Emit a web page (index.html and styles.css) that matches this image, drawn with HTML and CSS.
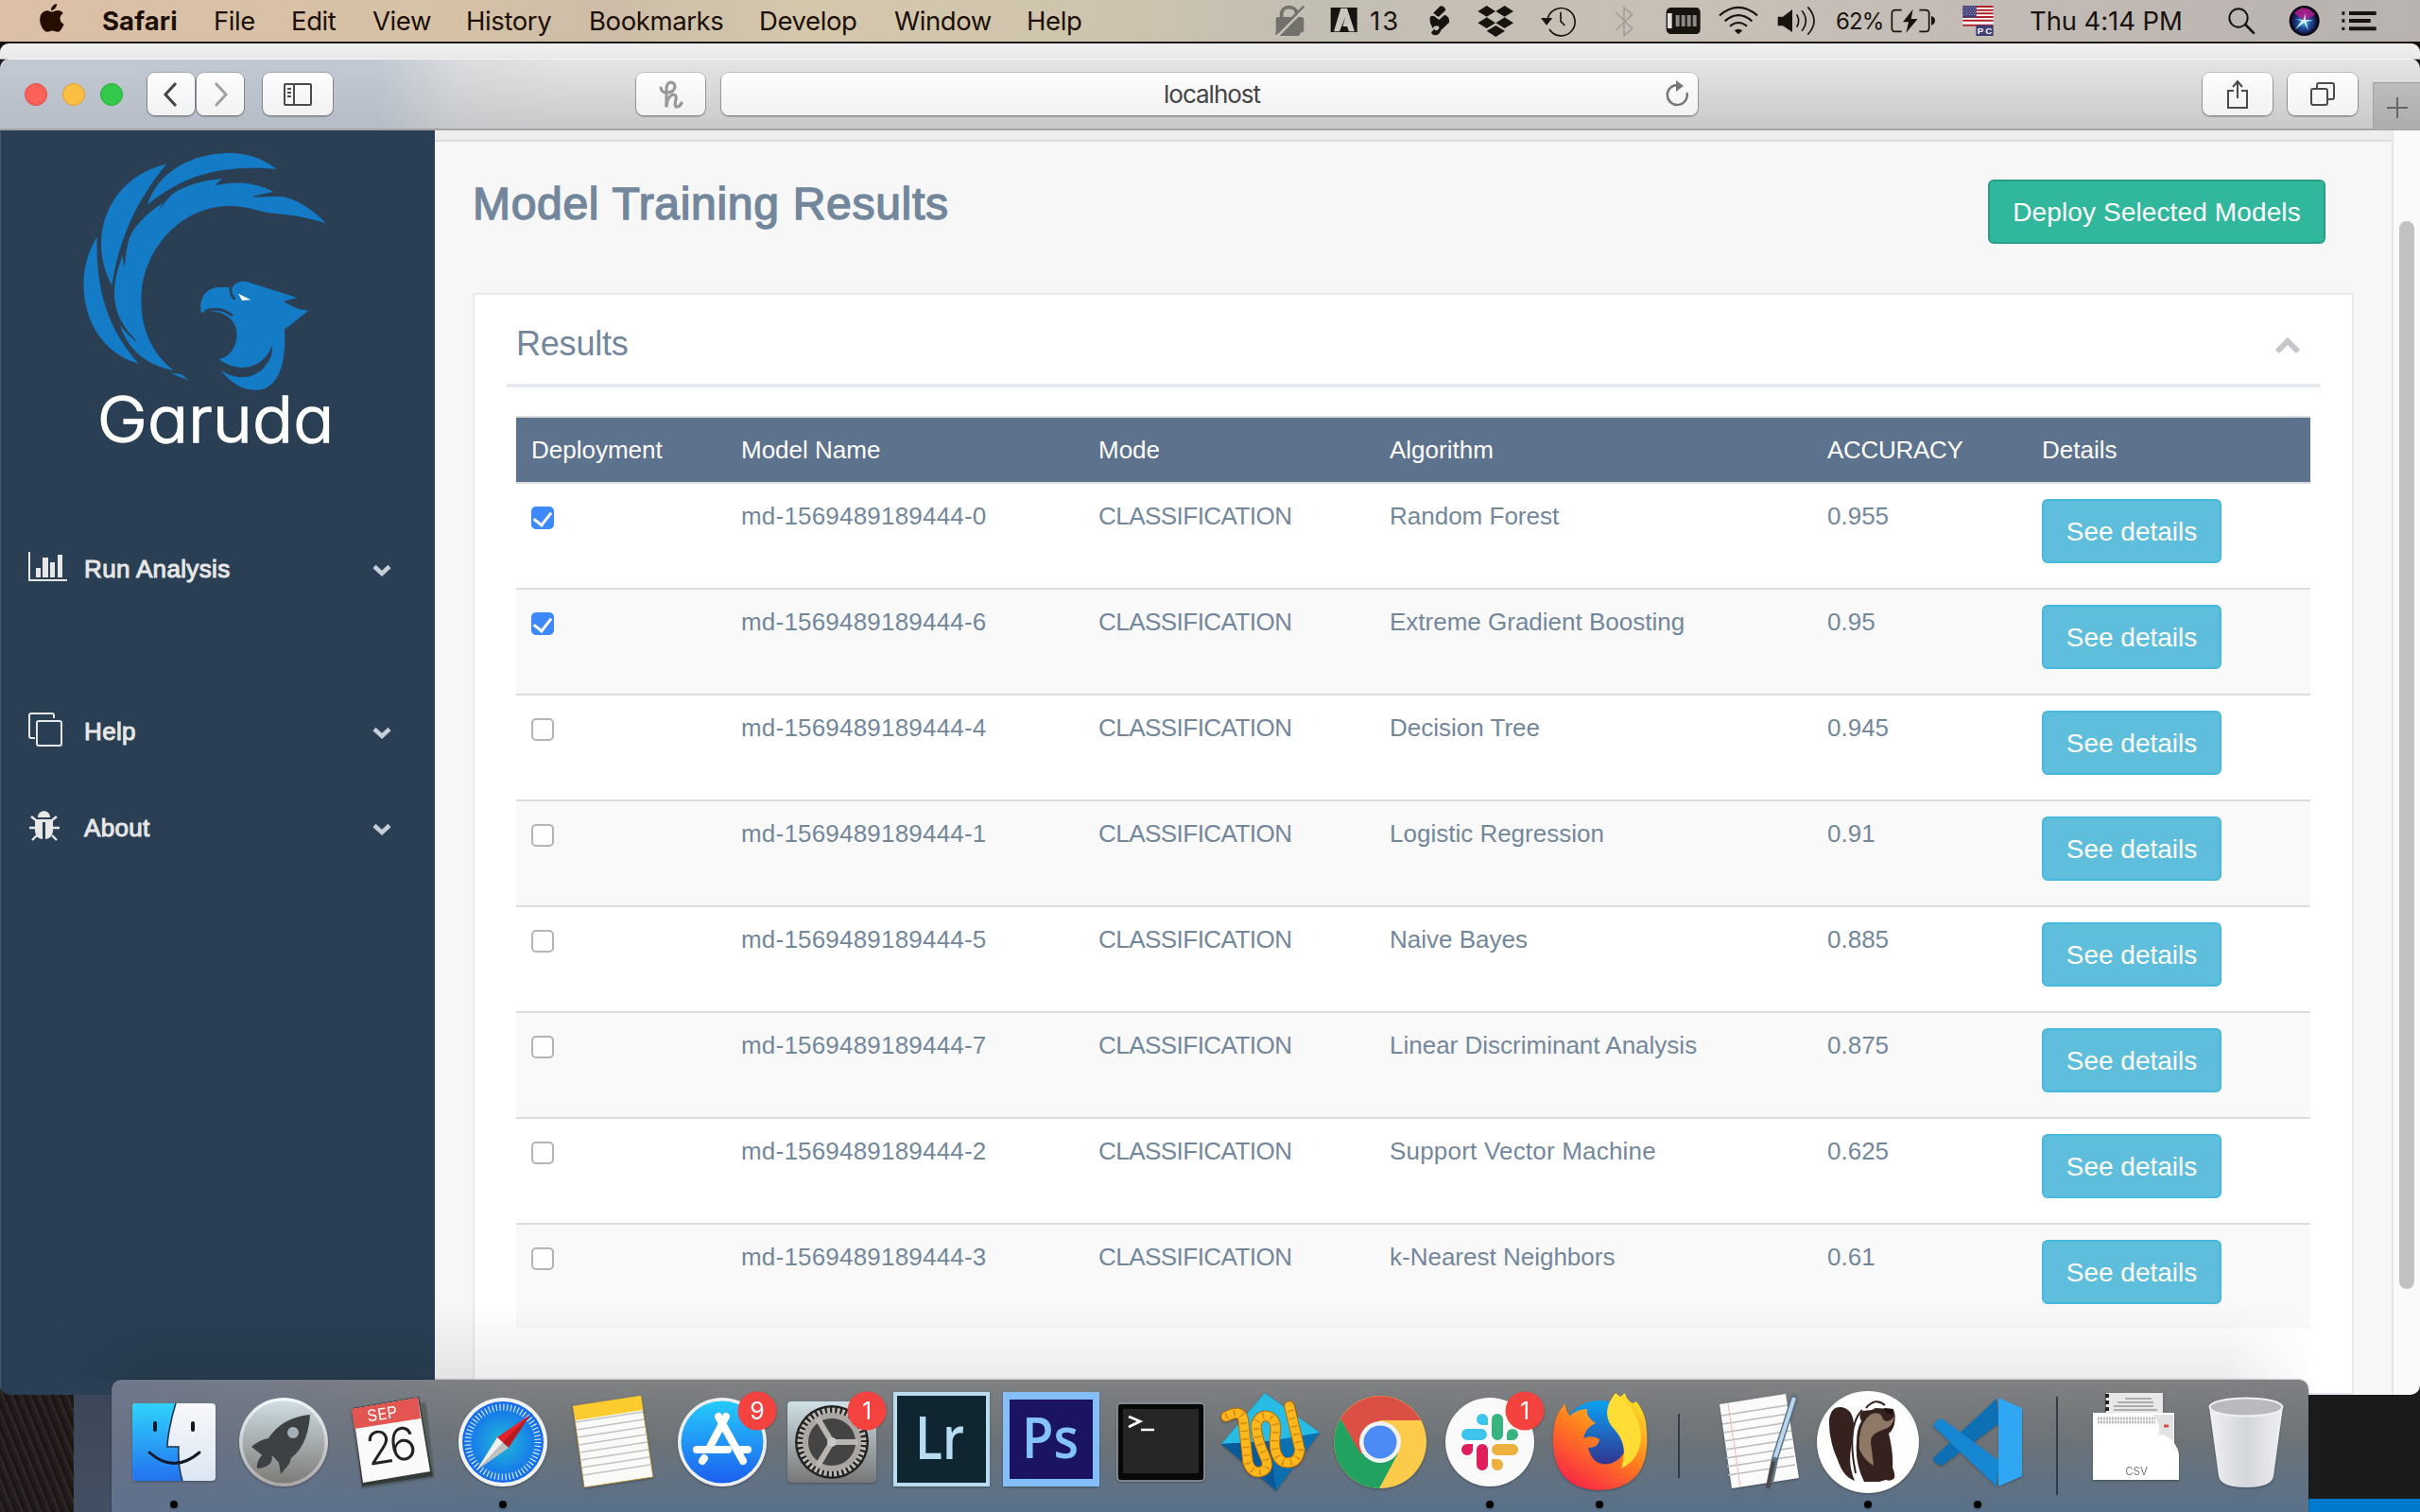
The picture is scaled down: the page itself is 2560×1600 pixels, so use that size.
FILE: index.html
```html
<!DOCTYPE html>
<html lang="en">
<head>
<meta charset="utf-8">
<title>Model Training Results</title>
<link rel="stylesheet" href="styles.css">
</head>
<body>
<header class="menubar">
  <svg class="apple" viewBox="0 0 26 32"><path d="M18 0c.4 3.400-2.600 7-6 7C11.600 3.600 14.800.5 18 0zM13.200 8.600c1.500 0 3.300-1.600 6-1.600 2.200 0 4.400 1.200 5.600 3-4.800 2.800-4 9.400.8 11.400-1 2.800-3.800 8.400-6.600 8.400-2.200 0-2.900-1.300-5.500-1.300S9.900 29.800 8 29.800C4.400 29.800.2 23 .2 16.800.2 10.600 4 7.200 7.800 7.200c2.400 0 4 1.400 5.400 1.400z"/></svg>
  <nav class="menus"><b>Safari</b><span>File</span><span>Edit</span><span>View</span><span>History</span><span>Bookmarks</span><span>Develop</span><span>Window</span><span>Help</span></nav>
  <div class="extras">
    <svg width="32" height="44" viewBox="26 0 96 132" fill="#73716b"><path d="M46 56V44c0-28 48-28 48 0v12" fill="none" stroke="#73716b" stroke-width="11"/><path d="M32 54h80q5 2 5 10v36l-10 4-6 10H42l-2-8q-12-2-12-10V64q0-8 4-10z"/><path d="M30 118 124 24" stroke="#c5c1b7" stroke-width="8"/><path d="M26 109 117 20" stroke="#73716b" stroke-width="7"/></svg>
    <svg width="30" height="44" viewBox="202 0 90 132"><path d="M204 24h84v78h-84z"/><path d="M214 100 236 26h20l24 74h-18l-6-16h-14l9-31-19 47z" fill="#cac6bd"/></svg>
    <span class="count">13</span>
    <svg width="24" height="44" viewBox="520 0 72 132"><path d="m532 42 20-20q6-6 12-2l6 6q4 5-1 9l-19 18q-6-2-10-6-4-4-8-5z"/><path d="M524 52q8-5 18 4l9 7 17-15q10 0 15 14v9l-25 24q-6-14-16-13-8 1-11 8-14-25-7-38z"/><path d="M552 82q8 4 5 15-5 15-19 15-10-1-12-9l10-11q3 1 2 5l8-1q7-5 6-14z"/></svg>
    <svg width="40" height="44" viewBox="668 0 120 132"><path d="m697 18 28 18-28 17-28-17zm57 0 28 18-28 17-28-17zm-57 37 28 18-28 17-28-17zm57 0 28 18-28 17-28-17zm-28 26 29 17-29 19-29-19z"/></svg>
    <svg width="38" height="44" viewBox="870 0 114 132"><path d="M891 62a44 44 0 1 1 6 31M933 38v30l13 13" fill="none" stroke="#1b160f" stroke-width="5"/><path d="M870 57h37l-19 23z"/></svg>
    <svg width="22" height="44" viewBox="1106 0 66 132" fill="none" stroke="#a39e97" stroke-width="5"><path d="m1110 39 52 52-26 22V24l26 22-52 50"/></svg>
    <svg width="38" height="44" viewBox="1264 0 114 132"><path d="M1278 24h84q12 2 12 16v52q0 14-12 16h-84q-12-4-12-16V40q0-12 12-16z"/><path d="M1270 42h14v48h-14z" fill="#e5e0dc"/><path d="M1296 48h12v36h-12zm18 0h12v36h-12zm18 0h12v36h-12zm18 0h12v36h-12z" fill="#8d8885"/></svg>
    <svg width="42" height="44" viewBox="1434 0 126 132" fill="none" stroke="#17130f" stroke-width="6.500"><path d="M1437 49q60-51 120 0M1454 67q43-37 86 0M1470 83q27-22 54 0"/><path d="M1484 97q13-9 26 0l-13 12z" fill="#17130f" stroke="none"/></svg>
    <svg width="42" height="44" viewBox="59 0 126 132"><path d="M61 53h16l30-23v72L77 82H61z"/><path d="M121 46q12 20 0 40M137 34q26 32 0 64M156 22q40 44 0 88" fill="none" stroke="#17130f" stroke-width="5"/></svg>
    <span class="pct">62%</span>
    <svg width="48" height="44" viewBox="417 0 144 132"><path d="M452 32h-20q-11 0-11 11v46q0 11 11 11h20M508 32h20q11 0 11 11v46q0 11-11 11h-20" fill="none" stroke="#17130f" stroke-width="5"/><path d="m488 29-32 41h18l-8 34 37-44h-21zM546 51q12 3 12 14t-12 15z"/></svg>
    <svg width="34" height="44" viewBox="647 0 102 132"><path fill="#fff" d="M648 18h97v65h-97z"/><path stroke="#b02029" stroke-width="6" d="M648 21h97M648 32h97M648 43h97M648 54h97M648 65h97M648 80h97"/><path fill="#3f3f78" d="M648 18h43v38h-43zM690 80h55v34h-55z"/><path stroke="#bbbad4" stroke-width="3" stroke-dasharray="3 5" d="M651 23h38M655 29h34M651 35h38M655 41h34M651 47h38"/><text x="694" y="107" font-family="Liberation Sans" font-weight="700" font-size="29" fill="#fff" textLength="46">PC</text></svg>
    <time class="clock">Thu 4:14 PM</time>
    <svg width="31" height="44" viewBox="1493 0 93 132" fill="none" stroke="#17130f"><circle cx="1526" cy="57" r="29" stroke-width="6"/><path d="m1548 78 28 29" stroke-width="8"/></svg>
    <svg width="34" height="44" viewBox="1684 0 102 132"><defs><radialGradient id="siri" cx=".5" cy=".55"><stop offset="0" stop-color="#4fb4e6"/><stop offset=".5" stop-color="#1c4f9a"/><stop offset="1" stop-color="#130c38"/></radialGradient></defs><circle cx="1734" cy="66" r="48" fill="#08060f"/><circle cx="1734" cy="66" r="41" fill="url(#siri)"/><path d="M1702 42q32-36 66 4l-32 22z" fill="#b31d8c" opacity=".85"/><path d="m1706 60 25 3 6-22 1 22 26 2-24 4 7 28-14-25-28 22 20-28z" fill="#cdeefa"/></svg>
    <svg width="38" height="44" viewBox="1852 0 114 132"><path d="M1853 37h9v10h-9zm0 24h9v10h-9zm0 25h9v10h-9zM1876 36h86v12h-86zm0 24h68v12h-68zm0 25h86v12h-86z"/></svg>
  </div>
</header>
<div class="back-window"></div>
<main class="window">
  <div class="toolbar">
    <div class="lights"><i class="red"></i><i class="yellow"></i><i class="green"></i></div>
    <div class="tb back"><svg width="20" height="30" viewBox="0 0 20 30"><path d="M15 3 4 15l11 12" fill="none" stroke="#444" stroke-width="3"/></svg></div>
    <div class="tb fwd"><svg width="20" height="30" viewBox="0 0 20 30"><path d="m5 3 11 12L5 27" fill="none" stroke="#a0a0a0" stroke-width="3"/></svg></div>
    <div class="tb side"><svg width="32" height="26" viewBox="0 0 32 26" fill="none" stroke="#4b4b4b" stroke-width="2"><rect x="2" y="2" width="28" height="22" rx="1"/><path d="M12 2v22M5 7h4M5 11h4M5 15h4"/></svg></div>
    <div class="tb honey"><svg width="26" height="30" viewBox="0 0 26 30" fill="none" stroke="#999" stroke-linecap="round"><path d="M2 8q1 5 6 5 8 0 9-6 0-4-4-5-5 0-5 8v17" stroke-width="3.200"/><path d="M8 27q1-10 7-12 4 0 3 5-2 8 1 8 3 0 5-4" stroke-width="3.200"/></svg></div>
    <div class="url"><span>localhost</span><svg width="26" height="30" viewBox="0 0 26 30"><path d="M14 5a10.500 10.500 0 1 0 9.500 8" fill="none" stroke="#777" stroke-width="2.500"/><path d="m12 0 8 6-8 6z" fill="#777"/></svg></div>
    <div class="tb share"><svg width="26" height="32" viewBox="0 0 26 32" fill="none" stroke="#4b4b4b" stroke-width="2"><path d="M9 12H3v18h20V12h-6M13 20V3M8 8l5-6 5 6"/></svg></div>
    <div class="tb tabs"><svg width="28" height="28" viewBox="0 0 28 28" fill="none" stroke="#4b4b4b" stroke-width="2"><rect x="2" y="8" width="17" height="17" rx="2"/><path d="M8 8V4q0-2 2-2h14q2 0 2 2v13q0 2-2 2h-5"/></svg></div>
    <div class="newtab"><svg width="24" height="24" viewBox="0 0 24 24"><path d="M12 1v22M1 12h22" stroke="#666" stroke-width="2"/></svg></div>
  </div>
  <div class="page">
    <aside class="sidebar">
      <svg class="logo" width="460" height="367" viewBox="3 24 1380 1101" fill="#147bc7">
        <path d="M468 260C500 160 600 97 730 96c60 0 110 20 148 51-170-15-290 15-410 113zM528 131c-90 110-150 230-173 385C270 360 350 170 528 131zM308 362c-5 160 30 290 132 402C270 720 220 500 308 362z"/>
        <path d="M705 178c-50 2-120 20-160 50-20 20-28 34-42 54 4-12 12-22 16-30-60 40-110 90-115 140-4 20-6 40-9 66-4-14-4-24-6-36-20 50-27 90-26 130 5 60 30 100 76 146-20-10-46-40-58-56 20 70 80 128 170 144-80-60-110-160-102-250 10-140 130-275 285-272 60 2 90 18 120 22 60 4 120 14 180 32-50-50-100-78-140-84-30-1-70 2-95 1 22-8 50-12 70-16-60-30-120-36-186-20 6-8 14-14 22-21zM540 794l60 24-24-20z"/>
        <path d="M638 602c-8-50 20-80 60-80h40c10-20 40-24 60-13l145 46-44 12c20 10 40 26 80 29l-76 60c4 80-6 170-70 190-60 10-100-20-132-60 60 40 120 20 145-20 16-20 20-40 18-60-20 60-90 100-170 44 60-10 70-90 44-120-20-26-50-32-78-32z"/>
        <path d="M650 598c30-12 60-8 88 14M732 522c-2 16 4 30 14 38" fill="none" stroke="#2b3f54" stroke-width="8"/>
        <path d="M756 542l40 20-28 2z" fill="#fff"/>
        <text class="brand" x="308" y="1013" font-size="202" fill="#fff" stroke="#fff" stroke-width="4" textLength="752" lengthAdjust="spacingAndGlyphs">Garuda</text>
      </svg>
      <ul class="nav">
        <li class="run"><svg width="44" height="36" viewBox="0 0 44 36" fill="#e7e7e7"><path d="M0 0h2v29h39v2H0zM8 17h5v10H8zM15 6h6v21h-6zM23 11h5v16h-5zM31 3h5v24h-5z"/></svg><span>Run Analysis</span><svg class="chev" width="20" height="14" viewBox="0 0 20 14"><path d="m2 2.500 8 7.500 8-7.500"/></svg></li>
        <li class="help"><svg width="44" height="38" viewBox="0 0 44 38" fill="none" stroke="#e7e7e7" stroke-width="2"><rect x="9" y="9" width="26" height="26" rx="2"/><path d="M27 6V3q0-2-2-2H3Q1 1 1 3v22q0 2 2 2h4"/></svg><span>Help</span><svg class="chev" width="20" height="14" viewBox="0 0 20 14"><path d="m2 2.500 8 7.500 8-7.500"/></svg></li>
        <li class="about"><svg width="44" height="34" viewBox="0 0 44 34" fill="#e7e7e7"><path d="M10 7c0-9 13-9 13 0zM7 9h19v13q-1 7-8 8V12h-3v18q-7-1-8-8z"/><path d="m3 6 5 4m22-4-5 4M1 18h7m25 0h-8M4 31l5-5m21 5-5-5" stroke="#e7e7e7" stroke-width="2.400"/></svg><span>About</span><svg class="chev" width="20" height="14" viewBox="0 0 20 14"><path d="m2 2.500 8 7.500 8-7.500"/></svg></li>
      </ul>
    </aside>
    <section class="content">
      <div class="topstrip"></div>
      <div class="title-row"><h1>Model Training Results</h1><button class="deploy">Deploy Selected Models</button></div>
      <div class="panel">
        <div class="panel-head"><h2>Results</h2><svg width="28" height="20" viewBox="0 0 28 20"><path d="m3 17 11-11 11 11" fill="none" stroke="#c5c7cb" stroke-width="6"/></svg></div>
        <div class="table">
          <div class="row head"><span>Deployment</span><span>Model Name</span><span>Mode</span><span>Algorithm</span><span class="acc">ACCURACY</span><span>Details</span></div>
          <div class="row"><i class="cb on"></i><span class="md">md-1569489189444-0</span><span class="cls">CLASSIFICATION</span><span>Random Forest</span><span>0.955</span><button>See details</button></div>
          <div class="row alt"><i class="cb on"></i><span class="md">md-1569489189444-6</span><span class="cls">CLASSIFICATION</span><span>Extreme Gradient Boosting</span><span>0.95</span><button>See details</button></div>
          <div class="row"><i class="cb"></i><span class="md">md-1569489189444-4</span><span class="cls">CLASSIFICATION</span><span>Decision Tree</span><span>0.945</span><button>See details</button></div>
          <div class="row alt"><i class="cb"></i><span class="md">md-1569489189444-1</span><span class="cls">CLASSIFICATION</span><span>Logistic Regression</span><span>0.91</span><button>See details</button></div>
          <div class="row"><i class="cb"></i><span class="md">md-1569489189444-5</span><span class="cls">CLASSIFICATION</span><span>Naive Bayes</span><span>0.885</span><button>See details</button></div>
          <div class="row alt"><i class="cb"></i><span class="md">md-1569489189444-7</span><span class="cls">CLASSIFICATION</span><span>Linear Discriminant Analysis</span><span>0.875</span><button>See details</button></div>
          <div class="row"><i class="cb"></i><span class="md">md-1569489189444-2</span><span class="cls">CLASSIFICATION</span><span class="svm">Support Vector Machine</span><span>0.625</span><button>See details</button></div>
          <div class="row alt"><i class="cb"></i><span class="md">md-1569489189444-3</span><span class="cls">CLASSIFICATION</span><span>k-Nearest Neighbors</span><span>0.61</span><button>See details</button></div>
        </div>
      </div>
    </section>
    <div class="scroll"><div class="thumb"></div></div>
  </div>
</main>
<div class="dock-shadow"></div>
<footer class="dock">
  <svg class="app" viewBox="-58 -66 116 140"><defs><linearGradient id="fa" x2="0" y2="1"><stop stop-color="#30d3fb"/><stop offset="1" stop-color="#2272f0"/></linearGradient><linearGradient id="fb" x2="0" y2="1"><stop stop-color="#f8f8fa"/><stop offset="1" stop-color="#dbe6f3"/></linearGradient></defs><rect x="-44" y="-41" width="88" height="82" rx="4" fill="url(#fb)"/><path d="M-40-41H2C-4-22-7-2-7 5H5q-1 20 4 36h-49q-4 0-4-4v-74q0-4 4-4z" fill="url(#fa)"/><path d="M2-41C-4-22-7-2-7 5H5q-1 20 4 36" fill="none" stroke="#20304a" stroke-width="1.500"/><path d="M-20-20v7M20-20v7" stroke="#111827" stroke-width="4" stroke-linecap="round"/><path d="M-26 11Q0 34 27 11" fill="none" stroke="#111827" stroke-width="3" stroke-linecap="round"/><circle cy="66" r="4"/></svg>
  <svg class="app" viewBox="-58 -66 116 140"><defs><linearGradient id="la" x2="0" y2="1"><stop stop-color="#cfdde3"/><stop offset="1" stop-color="#7d7b78"/></linearGradient><linearGradient id="lb" x2="0" y2="1"><stop stop-color="#f0f8fa"/><stop offset="1" stop-color="#aaa8a6"/></linearGradient></defs><circle r="47" fill="url(#lb)"/><circle r="43.500" fill="url(#la)"/><path d="M28-29q-2 32-20 46l-2 6-9 11-2-12-6-7-9 1-14-11q8-7 18-9Q-2-26 28-29zM-18 11q3 4 6 5 0 10-15 12-3-1 1-10 4-6 8-7z" fill="#3d4143"/><circle cx="10" cy="-10" r="6" fill="#a4b0b6"/></svg>
  <svg class="app" viewBox="-58 -66 116 140"><g transform="translate(-2 0)"><path d="m-42-30 78-12 9 78-76 12z" fill="#59615f"/><path d="m-41-36 70-12 15 84-75 11z" fill="#333a38"/><path d="m-41-35 69-12 13 78-71 12z" fill="#fafafa"/><path d="m-42-35 70-12 3 22-70 11z" fill="#e25551"/><g transform="rotate(-9)"><text x="-5" y="-25" text-anchor="middle" font-size="17" fill="#fff">SEP</text><text x="-1" y="21" text-anchor="middle" font-size="48" font-weight="300" fill="#222" textLength="54">26</text></g></g></svg>
  <svg class="app" viewBox="-58 -66 116 140"><defs><radialGradient id="sa"><stop stop-color="#20bbd8"/><stop offset="1" stop-color="#1569ee"/></radialGradient></defs><circle r="47" fill="#f1f2f4"/><circle r="43" fill="url(#sa)"/><circle r="37" fill="none" stroke="#d7edff" stroke-width="7" stroke-dasharray="1.200 2.675"/><path d="m29-29-23 35L-6-5z" fill="#e5222a"/><path d="M-28 30-6-5 6 6z" fill="#f0f1f2"/><path d="m29-29-23 35L0 0zM-28 30 0 0l6 6z" opacity=".2"/><circle cy="66" r="4"/></svg>
  <svg class="app" viewBox="-58 -66 116 140"><path d="m-42-38 72-11L43 37l-73 11z" fill="#fafaf8" stroke="#a58b3c"/><path d="m-42-38 72-11 2 15-71 11z" fill="#fbcb30"/><path d="m-39-21 71-11m-70 19 71-11m-70 19 71-11m-70 19 72-11m-71 19 72-11m-71 19 72-11m-71 19 72-11m-70 19 71-11" stroke="#c3c3c5" stroke-width="1.500"/></svg>
  <svg class="app" viewBox="-58 -66 116 140"><defs><linearGradient id="as" x2="0" y2="1"><stop stop-color="#25cbfb"/><stop offset="1" stop-color="#1c5ff0"/></linearGradient></defs><circle r="47" fill="#eceef2"/><circle r="43.500" fill="url(#as)"/><path d="M4-27-14 7M-4-27 22 20M-27 8H6M20 8h7M-19 17l-2 3" stroke="#fff" stroke-width="8" stroke-linecap="round" fill="none"/><circle cx="37" cy="-33" r="20.500" fill="#f4423e"/><text x="37" y="-24" text-anchor="middle" font-size="25" fill="#fff">9</text></svg>
  <svg class="app" viewBox="-58 -66 116 140"><defs><linearGradient id="st" x2="0" y2="1"><stop stop-color="#cfe0e6"/><stop offset="1" stop-color="#777"/></linearGradient></defs><rect x="-47" y="-43" width="94" height="86" rx="4" fill="url(#st)"/><circle r="39" fill="#222"/><circle r="33" fill="none" stroke="#bdbab6" stroke-width="7" stroke-dasharray="3 2.183"/><circle r="28" fill="#444" stroke="#aaa7a3" stroke-width="6"/><path d="M0 0h28M0 0l-15-25M0 0l-15 25" stroke="#b9b6b2" stroke-width="6"/><circle r="5" fill="#c8c8c8"/><circle cx="37" cy="-33" r="20.500" fill="#f4423e"/><text x="37" y="-24" text-anchor="middle" font-size="25" fill="#fff">1</text></svg>
  <svg class="app" viewBox="-58 -66 116 140"><path fill="#b7dcef" d="M-51-53h102V47H-51z"/><path fill="#0f2630" d="M-47-49h94v92h-94z"/><text class="adobe" x="-28" y="18" font-size="63" fill="#b7dcef" textLength="52" lengthAdjust="spacingAndGlyphs">Lr</text></svg>
  <svg class="app" viewBox="-58 -66 116 140"><path fill="#85bffb" d="M-51-53h102V47H-51z"/><path fill="#1b1464" d="M-44-45h88v84h-88z"/><text class="adobe" x="-31" y="17" font-size="60" fill="#85c3fb" textLength="60" lengthAdjust="spacingAndGlyphs">Ps</text></svg>
  <svg class="app" viewBox="-58 -66 116 140"><rect x="-46" y="-41" width="92" height="82" rx="4" fill="#080808" stroke="#99a1a5" stroke-width="1.500"/><path fill="#262626" d="M-40-35h80v68h-80z"/><path d="m-34-27 12 5-12 6M-21-13h14" stroke="#fff" stroke-width="2.700" fill="none"/></svg>
  <svg class="app" viewBox="-58 -66 116 140"><path d="m-6-52 58 42L6 51l-58-49z" fill="#0b70b0"/><path d="m-6-52 58 42-53 9-51 3z" fill="#26bce4"/><path d="M6 51-1-1l-51 3z" fill="#085a98"/><g fill="none" stroke-linecap="round" stroke-linejoin="round"><path d="M-47-27q15-8 18 2l5 46q5 15 17 9 6-4 1-15-10-22-9-34 4-11 13-8 9 3 7 19-3 22 8 29 16 4 18-13L20-38" stroke="#b96c06" stroke-width="11.500"/><path d="M-47-27q15-8 18 2l5 46q5 15 17 9 6-4 1-15-10-22-9-34 4-11 13-8 9 3 7 19-3 22 8 29 16 4 18-13L20-38" stroke="#fdb81e" stroke-width="9.500"/><path d="M-47-27q15-8 18 2l5 46q5 15 17 9 6-4 1-15-10-22-9-34 4-11 13-8 9 3 7 19-3 22 8 29 16 4 18-13L20-38" stroke="#d98a10" stroke-width="7" stroke-linecap="butt" stroke-dasharray="1.500 7"/></g></svg>
  <svg class="app" viewBox="-58 -66 116 140"><circle r="49" fill="#fdcb4c"/><path d="M-42-25A49 49 0 0 1 43-23H0l-20 12z" fill="#db4f44"/><path d="M-42-25A49 49 0 0 0-1 49L19 12-20 12z" fill="#22a260"/><path d="M-42-25-21 12 0 0v-22z" fill="#db4f44"/><circle r="22" fill="#f3f3f3"/><circle r="17.500" fill="#4c8bf5"/></svg>
  <svg class="app" viewBox="-58 -66 116 140"><circle r="47" fill="#fafafa"/><g stroke-width="12" stroke-linecap="round"><path d="M-24-8h15M-8-24v-.1" stroke="#3ec5ee"/><path d="M8-24V-8M24-8h-.1" stroke="#36b37e"/><path d="M8 8h16M8 24h.1" stroke="#ebb03e"/><path d="M-8 8v16M-24 8h.1" stroke="#df1f5b"/></g><path d="M-8-24h6v6h-6z" fill="#3ec5ee"/><path d="M18-8v6h6z" fill="#36b37e"/><path d="M2 18h6l-6 6z" fill="#ebb03e"/><path d="M-24 2h6v6z" fill="#df1f5b"/><circle cx="37" cy="-33" r="20.500" fill="#f4423e"/><text x="37" y="-24" text-anchor="middle" font-size="25" fill="#fff">1</text><circle cy="66" r="4"/></svg>
  <svg class="app" viewBox="-58 -66 116 140"><defs><linearGradient id="ff" x1=".8" x2=".2" y2="1"><stop stop-color="#ffe226"/><stop offset=".5" stop-color="#ff7d1e"/><stop offset="1" stop-color="#f8204a"/></linearGradient><linearGradient id="fg" x2="0" y2="1"><stop stop-color="#0aa2f4"/><stop offset="1" stop-color="#3b1a78"/></linearGradient></defs><circle r="42" cy="-2" fill="url(#fg)"/><path d="M-36-41q0 9 5 13 7-7 18-7-2 8 9 15-11 5-13 16 9-4 17 1-1 9-12 9 5 20 22 17 22-5 20-38-2-10-9-18-7-10 6-19 2 8 8 11l4-2q8 10 10 22 10 71-50 72-51-2-48-60 2-19 8-26z" fill="url(#ff)"/><path d="M17-52q-18 22 0 40 14 16 6 40 20-10 21-33Q43-33 17-52z" fill="#ffdd35"/><circle cy="66" r="4"/></svg>
  <i class="sep short"></i>
  <svg class="app" viewBox="-58 -66 116 140"><path d="m-41-40 70-11L43 38l-71 11z" fill="#fbfbfb"/><path d="m-39-28 70-11m-69 20 70-11m-69 20 70-11m-69 20 71-11m-70 20 71-11m-70 20 71-11m-70 20 71-11m-70 20 71-11" stroke="#bbb" stroke-width="1.300"/><path d="m-32-41 13 88" stroke="#f2b6b0"/><path d="M38-47 18 16 13 40" stroke="#5f7386" stroke-width="7" stroke-linecap="round" fill="none"/><path d="M38-47 18 16" stroke="#b9d8ef" stroke-width="4"/><path d="m16 20-6 28" stroke="#4d474a" stroke-width="4"/></svg>
  <svg class="app" viewBox="-58 -66 116 140"><circle r="54" fill="#fff"/><path d="M-41-24q2-14 13-13 12 2 13 18 0 10-3 26-3 18 4 34-12-4-18-22-10-22-9-43z" fill="#35221f"/><path d="M-7-22q-4-8 2-11l9-1 4-2 18 1q4 4 2 16-2 7-6 10 5 20 4 36 3 6 2 11-3 4-9 2l-7 2H-4q-10-20-8-42 0-14 5-22z" fill="#35221f"/><path d="M4-30q10-3 12 6 5 5 12-3-1 11-12 14-14 4-13 14 2 14 3 24-9-5-15-17-2-28 13-38z" fill="#8f7866"/><path d="M-13 33q-10-50 7-67M-2-36q10-12 20-3" fill="none" stroke="#35221f" stroke-width="2"/><path d="m17-36 10 1-2 6q-7-1-8-7z" fill="#20110f"/><circle cy="66" r="4"/></svg>
  <svg class="app" viewBox="-58 -66 116 140"><path d="M-47 17 20-46l3 26-61 45q-8-2-9-8z" fill="#0e70b4"/><path d="M-47-17q3-7 9-8L23 20l-3 27z" fill="#1687d2"/><path d="m22-47 25 11v72L22 47z" fill="#2fa7f3"/><circle cy="66" r="4"/></svg>
  <i class="sep"></i>
  <svg class="app" viewBox="-58 -66 116 140"><path d="M-32-30v-22h60v30z" fill="#e8e8e8"/><path d="M-31-51v20" stroke="#222" stroke-width="4" stroke-dasharray="4 3"/><path d="M-12-46h28M-20-42h38M-24-38h42M-24-34h46" stroke="#999" stroke-width="1.500"/><path d="M-46-31h86v32q5 7 5 13v26h-91z" fill="#fff"/><path d="M-41-25H20M-41-21H20" stroke="#bbb" stroke-width="3" stroke-dasharray="2 1"/><path d="M18-29h21V0Q34-8 23-8 27-16 18-29z" fill="#e3e3e3"/><path d="M29-17h5" stroke="#e34b45" stroke-width="3"/><text x="0" y="35" text-anchor="middle" font-size="11.500" fill="#777">CSV</text></svg>
  <svg class="app" viewBox="-58 -66 116 140"><defs><linearGradient id="tr"><stop stop-color="#f0f1f3"/><stop offset=".5" stop-color="#d3d6da"/><stop offset="1" stop-color="#eeeff2"/></linearGradient></defs><path d="M-39-37-29 36q2 12 29 12t29-12l10-73z" fill="url(#tr)"/><ellipse cy="-37" rx="38.500" ry="9.500" fill="#b8babd" stroke="#f1f1f3" stroke-width="2"/></svg>
</footer>
</body>
</html>
```
FILE: styles.css
```css
* { box-sizing: border-box; }
body {
  margin: 0; width: 2560px; height: 1600px; overflow: hidden; position: relative;
  display: flex; flex-direction: column;
  font-family: "Liberation Sans", Arial, sans-serif;
  background:
    linear-gradient(#3c4658, #434f62) 78px 1476px / 40px 124px no-repeat,
    linear-gradient(#007acc, #007acc) 2442px 1586px / 118px 14px no-repeat,
    linear-gradient(#1b1b1b, #1b1b1b) 2442px 1470px / 118px 116px no-repeat,
    repeating-linear-gradient(68deg, #241c1d 0 3px, #302727 3px 5px, #1d1617 5px 9px) 0 1460px / 78px 140px no-repeat,
    #17120e;
}
svg { display: block; flex: none; }
button { font-family: inherit; }

.menubar {
  height: 44px; flex: none; display: flex; position: relative;
  background: linear-gradient(90deg, #dcbfa8, #d6c2a6 18%, #cdbda8 25%, #d4c7ac 33%, #cfc4ad 45%, #c3beb3 54%, #c8c0b7 72%, #b8b2b0);
  color: #1b0f06; font: 27.5px/45px Inter, sans-serif; letter-spacing: -.4px; white-space: nowrap;
}
.apple { width: 26px; height: 32px; margin: 4px 40px 0 42px; fill: #260d02; }
.menus { display: grid; grid-template-columns: 118px 82px 86px 99px 130px 180px 143px 140px 263px; }
.menus b { font-weight: 700; letter-spacing: .1px; }
.extras { display: grid; grid-template-columns: 58px 42px 63px 51px 67px 78px 54px 56px 62px 62px 58px 76px 73px 208px 64px 56px 40px; color: #17130f; fill: #17130f; }
.count { letter-spacing: 2px; }
.pct { font-size: 24px; letter-spacing: -.9px; }
.clock { letter-spacing: -.1px; margin-left: -2px; }

.back-window { height: 17px; margin-top: 2px; flex: none; border-radius: 9px 9px 0 0; background: linear-gradient(#f1f1f1, #e8e8e8); border-bottom: 1px solid #a5a7a9; }
.window { height: 1414px; margin-top: -1px; flex: none; border-radius: 10px; overflow: hidden; display: flex; flex-direction: column; }
.toolbar {
  height: 76px; flex: none; display: flex; align-items: flex-start; padding-top: 14px;
  border-top: 1px solid #f5f5f5; border-bottom: 2px solid #a3a4a5;
  background: linear-gradient(90deg, rgba(165,178,196,.55) 0 400px, rgba(190,198,208,.3) 480px, rgba(220,220,220,0) 600px), linear-gradient(#e5e5e5, #c9c9c9);
}
.lights { display: flex; gap: 16px; margin: 11px 0 0 26px; width: 130px; }
.lights i { width: 24px; height: 24px; border-radius: 50%; border: 1px solid #df4744; background: #fd6159; }
.lights .yellow { background: #fdbe41; border-color: #de9f34; }
.lights .green { background: #35c94b; border-color: #27aa35; }
.tb, .url { height: 45px; border-radius: 8px; background: linear-gradient(#fdfdfd, #f2f2f2); box-shadow: 0 0 0 1px rgba(0,0,0,.14), 0 1px 1px 1px rgba(0,0,0,.2); display: flex; align-items: center; justify-content: center; flex: none; }
.back { width: 50px; }
.fwd { width: 50px; margin-left: 2px; }
.side { width: 74px; margin-left: 20px; }
.honey { width: 73px; margin-left: 321px; }
.url { width: 1033px; margin-left: 17px; padding: 0 9px 0 468px; justify-content: space-between; font: 26px/46px Inter, sans-serif; letter-spacing: -1px; color: #444; }
.share { width: 74px; margin-left: 534px; }
.tabs { width: 74px; margin-left: 16px; }
.newtab { width: 50px; height: 50px; margin: 10px 0 0 16px; flex: none; background: linear-gradient(#bcbcbc, #adadad); border: 1px solid #a1a1a1; border-width: 1px 0 0 1px; display: flex; align-items: center; justify-content: center; padding-top: 2px; }

.page { flex: 1; display: flex; }
.sidebar { width: 460px; flex: none; background: #2a3f54; border-left: 1px solid #46586a; }
.brand { font-family: Inter, Lato, sans-serif; font-weight: 300; font-feature-settings: "cv11"; }
.nav { margin: 0; padding: 0; list-style: none; color: #e7e7e7; font-size: 26px; letter-spacing: .35px; }
.nav li { display: flex; height: 38px; padding-left: 29px; -webkit-text-stroke: 1px #e7e7e7; line-height: 39px; }
.nav span { width: 306px; margin-left: 15px; }
.nav li > .chev { margin-left: -1px; }
.chev { margin-top: 14px; fill: none; stroke: #c4cfda; stroke-width: 4.500; }
.run { margin-top: 78px; }
.help { margin-top: 134px; }
.about { margin-top: 64px; }
.run > svg:first-child { margin-top: 1px; }
.help > svg:first-child { margin-top: -1px; }
.about > svg:first-child { margin-top: 1px; }

.content { width: 2070px; flex: none; background: #f7f7f7; }
.topstrip { height: 12px; background: #ededed; border-bottom: 2px solid #d9dee4; }
.title-row { height: 160px; padding: 40px 70px 0 40px; display: flex; justify-content: space-between; align-items: flex-start; }
h1 { margin: -1px 0 0; font-size: 48px; font-weight: 400; line-height: 54px; color: #73879c; -webkit-text-stroke: 1.500px #73879c; letter-spacing: .7px; }
.deploy { width: 357px; height: 68px; font-size: 28px; color: #fff; background: #31b79b; border: 2px solid #26a085; border-radius: 6px; letter-spacing: .12px; padding: 2px 0 0; white-space: nowrap; }
.panel { width: 1990px; height: 1166px; margin-left: 40px; border: 2px solid #e6e9ed; background: #fff; padding-left: 34px; }
.panel-head { width: 1918px; height: 98px; border-bottom: 4px solid #e6e9ed; padding: 9px 20px 0 10px; display: flex; justify-content: space-between; align-items: center; }
.panel-head svg { margin-top: 2px; }
h2 { margin: 0; font-size: 36px; font-weight: 400; color: #73879c; letter-spacing: -.2px; }
.table { width: 1898px; margin: 30px 0 0 10px; color: #73879c; font-size: 26px; }
.row { display: grid; grid-template-columns: 222px 378px 308px 463px 227px 1fr; height: 112px; border-top: 2px solid #ddd; padding: 16px 0 0 16px; align-items: start; line-height: 36px; white-space: nowrap; }
.row.head { height: 70px; background: #5d728d; color: #fff; padding-top: 16px; }
.row.alt { background: #f9f9f9; }
.md { letter-spacing: .2px; }
.cls { letter-spacing: -.53px; }
.acc { letter-spacing: -.3px; }
.svm { letter-spacing: .2px; }
.row button { width: 190px; height: 68px; padding: 2px 0 0; font-size: 28px; color: #fff; background: #5fbedb; border: 2px solid #46b8da; border-radius: 6px; }
.cb { width: 24px; height: 24px; margin-top: 8px; border-radius: 5px; border: 2px solid #b4b4b4; background: #fff; display: flex; justify-content: center; }
.cb.on { background: #3d89fb; border-color: #3d89fb; }
.cb.on::after { content: ""; width: 9px; height: 15px; margin-top: 0; border: solid #fff; border-width: 0 3px 3px 0; transform: rotate(38deg); }
.scroll { flex: 1; background: #fafafa; border-left: 2px solid #e7e7e7; padding: 96px 0 0 6px; }
.thumb { width: 16px; height: 1130px; border-radius: 8px; background: #c1c1c1; }

.dock-shadow { position: absolute; left: 60px; top: 1380px; width: 2390px; height: 80px; background: linear-gradient(rgba(0,0,0,0), rgba(0,0,0,.08)); -webkit-mask-image: linear-gradient(90deg, transparent, #000 100px 2290px, transparent); mask-image: linear-gradient(90deg, transparent, #000 100px 2290px, transparent); }
.dock { position: absolute; left: 118px; top: 1460px; width: 2324px; height: 140px; padding: 0 8px; display: flex; border-radius: 10px 10px 0 0; font-family: Inter, sans-serif; background: linear-gradient(90deg, rgba(100,114,145,.6), rgba(100,114,145,0) 420px), linear-gradient(#808183, #6d7377 45%, #58708a); box-shadow: 0 0 2px rgba(0,0,0,.5); }
.app { width: 116px; height: 140px; filter: drop-shadow(0 1px 1px rgba(0,0,0,.3)); }
.adobe { font-family: "Open Sans", sans-serif; font-weight: 600; }
.sep { width: 52px; height: 104px; margin-top: 18px; flex: none; background: linear-gradient(#323d49, #2b3b4b) center / 2px 100% no-repeat; }
.sep.short { height: 68px; margin-top: 36px; }
```
